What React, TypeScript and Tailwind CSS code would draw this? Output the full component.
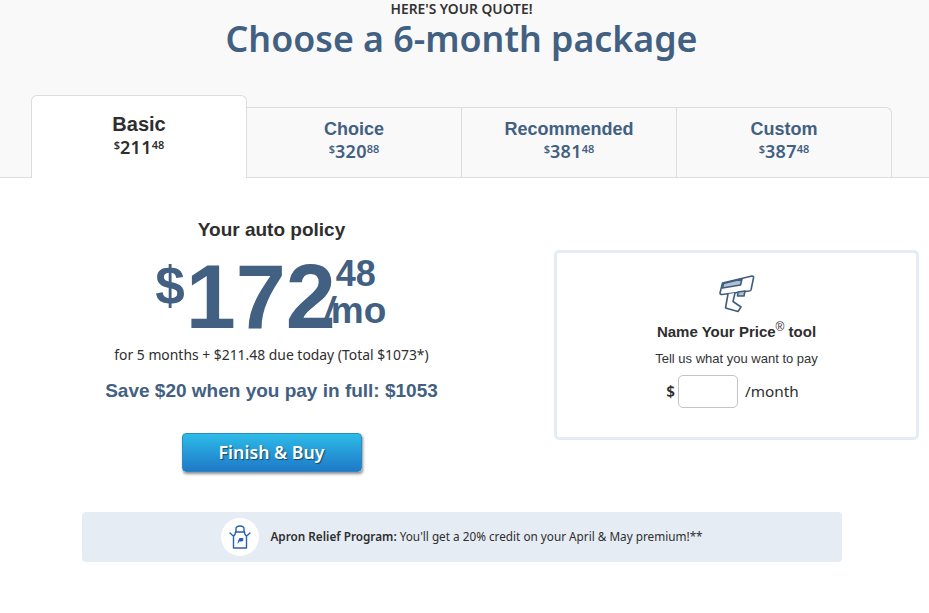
const sans = "font-['Liberation_Sans',Arial,sans-serif]"
const noto = "font-['Noto_Sans',sans-serif]"

const tabs = [
  { name: 'Basic', dollars: '211', cents: '48' },
  { name: 'Choice', dollars: '320', cents: '88' },
  { name: 'Recommended', dollars: '381', cents: '48' },
  { name: 'Custom', dollars: '387', cents: '48' },
]

function TabPrice({ dollars, cents }: { dollars: string; cents: string }) {
  return (
    <div className={`${noto} flex justify-center font-semibold leading-[20px]`}>
      <span className="text-[11px] leading-[15px]">$</span>
      <span className="text-[18px] tracking-[0.3px]">{dollars}</span>
      <span className="text-[11px] leading-[15px]">{cents}</span>
    </div>
  )
}

function PriceGun() {
  return (
    <svg width="38" height="38" viewBox="0 0 38 38" fill="none" stroke="#3f5d7f" strokeWidth="1.6" strokeLinejoin="round" strokeLinecap="round">
      <path d="M2 18 L4.500 8 L34 1 Q36 1 35.500 3 L33 15 Q32.500 16 31 16 L4 19.500 Q2 19.500 2 18 Z" fill="#fff" />
      <path d="M4.500 13 L5.500 8.500 L24 4 L22.500 10 Z" fill="#b4c0cf" />
      <path d="M20 17 L19.500 21 L26 21 L27 16 Z" fill="#b4c0cf" />
      <path d="M10 19 L7.500 33 L20 36.500 L23 32 L15 26.500 L17 18" fill="#fff" />
    </svg>
  )
}

function Apron() {
  return (
    <svg width="22" height="24" viewBox="0 0 22 24" fill="none" stroke="#2b62b0" strokeWidth="1.4" strokeLinejoin="round" strokeLinecap="round">
      <path d="M7 7 V4 Q7 1 11 1 Q15 1 15 4 V7" />
      <path d="M6.500 7 H15.500" />
      <path d="M1 8 Q3 10 4.500 11 V23 H17.500 V11 Q19 10 21 8" />
      <path d="M6.500 7 Q6.500 10 4.500 11 M15.500 7 Q15.500 10 17.500 11" />
      <path d="M9 18 L10.500 13.500 H14 L13.500 16 H10" fill="#2b62b0" strokeWidth="1" />
    </svg>
  )
}

export default function App() {
  return (
    <div className={`${sans} min-h-[613px] bg-white`}>
      {/* Header + tabs */}
      <div className="h-[178px] border-b border-[#dddddd] bg-[#f9f9f9]">
        <div className="flex h-[95px] flex-col items-center pr-[6px]">
          <p className={`${noto} text-[13.800px] leading-[17px] font-semibold text-[#333333]`}>HERE'S YOUR QUOTE!</p>
          <h1 className={`${noto} -mt-[1px] text-[35.750px] leading-[44px] font-semibold text-[#426081]`}>Choose a 6-month package</h1>
        </div>
        <div className="ml-[31px] flex h-[83px] w-[861px] items-end">
          {tabs.map((t, i) =>
            i === 0 ? (
              <div key={t.name} className="relative z-10 h-[83px] w-[216px] rounded-t-[6px] border border-b-0 border-[#dddddd] bg-white pt-[16px] text-center text-[#2e2e2e]">
                <div className="text-[20px] leading-[25px] font-bold">{t.name}</div>
                <TabPrice dollars={t.dollars} cents={t.cents} />
              </div>
            ) : (
              <div
                key={t.name}
                className={`h-[71px] flex-1 border-t border-r border-[#dddddd] pt-[10px] text-center text-[#426081] ${i === 3 ? 'rounded-tr-[6px]' : ''}`}
              >
                <div className="text-[18px] leading-[23px] font-bold">{t.name}</div>
                <TabPrice dollars={t.dollars} cents={t.cents} />
              </div>
            ),
          )}
        </div>
      </div>

      {/* Main */}
      <div className="flex">
        <div className="flex w-[543px] flex-col items-center pt-[40px]">
          <h2 className="text-[19px] leading-[24px] font-bold text-[#2e2e2e]">Your auto policy</h2>
          <div className="mt-[15px] mr-[2px] flex h-[80px] items-start font-bold text-[#426081]">
            <span className="mt-[4px] -ml-[1px] pr-[1px] text-[53px] leading-[50px]">$</span>
            <span className="text-[90px] leading-[80px]">172</span>
            <div className="flex w-[49px] flex-col">
              <span className="text-[36px] leading-[34px]">48</span>
              <span className="-ml-[12px] text-[37px] leading-[40px] whitespace-nowrap"><i className="-mr-[3px] inline-block text-[36px]">/</i>mo</span>
            </div>
          </div>
          <p className={`${noto} mt-[8px] text-[13.900px] leading-[20px] text-[#2e2e2e]`}>for 5 months + $211.48 due today (Total $1073*)</p>
          <p className="mt-[14px] text-[19px] leading-[24px] font-bold text-[#426081]">Save $20 when you pay in full: $1053</p>
          <button className={`${noto} mt-[30px] h-[39px] w-[180px] rounded-[4px] border border-[#2a8bc9] bg-gradient-to-b from-[#2dbbe7] to-[#2079c7] text-[17.700px] font-semibold text-white shadow-[1px_2px_3px_rgba(0,0,0,0.45)] [text-shadow:1px_1px_1px_rgba(0,0,0,0.5)]`}>
            Finish &amp; Buy
          </button>
        </div>

        <div className="mt-[72px] ml-[11px] flex h-[190px] w-[365px] flex-col items-center rounded-[5px] border-[3px] border-[#e6ecf5] pt-[22px]">
          <PriceGun />
          <h3 className="mt-[9px] text-[15px] leading-[20px] font-bold text-[#2e2e2e]">
            Name Your Price<sup className="text-[12px] font-normal text-[#2e2e2e]">®</sup> tool
          </h3>
          <p className="mt-[8px] text-[13px] leading-[18px] text-[#333333]">Tell us what you want to pay</p>
          <div className={`${noto} mt-[7px] mr-[8px] flex items-center text-[15.300px] text-[#2e2e2e]`}>
            <span className="font-semibold">$</span>
            <input className="mr-[7px] ml-[3px] h-[33px] w-[60px] rounded-[5px] border border-[#c4c4c4] bg-white" />
            <span>/month</span>
          </div>
        </div>
      </div>

      {/* Apron banner */}
      <div className="mt-[40px] ml-[82px] flex h-[50px] w-[760px] items-center justify-center rounded-[4px] bg-[#e6ecf4]">
        <div className="flex h-[38px] w-[38px] items-center justify-center rounded-full bg-white">
          <Apron />
        </div>
        <p className={`${noto} ml-[11px] text-[11.750px] text-[#2e2e2e]`}>
          <span className="font-semibold">Apron Relief Program:</span> You'll get a 20% credit on your April &amp; May premium!**
        </p>
      </div>
    </div>
  )
}
